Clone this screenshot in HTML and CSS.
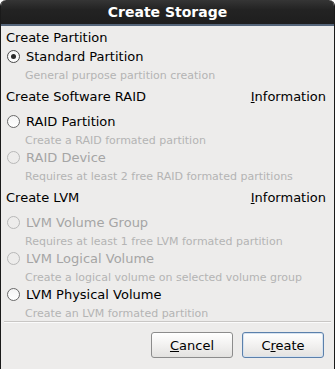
FILE: index.html
```html
<!DOCTYPE html>
<html>
<head>
<meta charset="utf-8">
<link rel="stylesheet" href="styles.css">
</head>
<body>
<div class="dialog">
  <div class="titlebar">Create Storage</div>
  <div class="content">
    <div class="heading first">Create Partition</div>
    <div class="radio"><span class="dot checked"></span><span class="label">Standard Partition</span></div>
    <div class="desc">General purpose partition creation</div>

    <div class="heading info-row"><span>Create Software RAID</span><span class="info"><u>I</u>nformation</span></div>
    <div class="radio"><span class="dot"></span><span class="label">RAID Partition</span></div>
    <div class="desc">Create a RAID formated partition</div>
    <div class="radio disabled"><span class="dot"></span><span class="label">RAID Device</span></div>
    <div class="desc">Requires at least 2 free RAID formated partitions</div>

    <div class="heading info-row"><span>Create LVM</span><span class="info"><u>I</u>nformation</span></div>
    <div class="radio disabled"><span class="dot"></span><span class="label">LVM Volume Group</span></div>
    <div class="desc">Requires at least 1 free LVM formated partition</div>
    <div class="radio disabled"><span class="dot"></span><span class="label">LVM Logical Volume</span></div>
    <div class="desc">Create a logical volume on selected volume group</div>
    <div class="radio"><span class="dot"></span><span class="label">LVM Physical Volume</span></div>
    <div class="desc">Create an LVM formated partition</div>
  </div>
  <div class="separator"></div>
  <div class="actions">
    <button class="btn"><u>C</u>ancel</button>
    <button class="btn default">C<u>r</u>eate</button>
  </div>
</div>
</body>
</html>
```

FILE: styles.css
```css
html, body {
  margin: 0;
  padding: 0;
  background: #ffffff;
}
body {
  font-family: "DejaVu Sans", sans-serif;
  font-size: 13px;
  color: #000;
}
.dialog {
  width: 335px;
  height: 369px;
  box-sizing: border-box;
  background: #edeceb;
  border-left: 1px solid #1a1a1a;
  border-right: 1px solid #1a1a1a;
  border-radius: 6px 6px 0 0;
  display: flex;
  flex-direction: column;
  overflow: hidden;
}
.titlebar {
  height: 24px;
  line-height: 24px;
  background: linear-gradient(#353535, #232323 40%, #1e1e1e);
  color: #ffffff;
  font-weight: bold;
  font-size: 14px;
  text-align: center;
  border-bottom: 2px solid #55657a;
  margin: 0 -1px;
  border-radius: 6px 6px 0 0;
}
.content {
  padding: 2px 5px 0 5px;
  display: flex;
  flex-direction: column;
}
.heading {
  height: 19px;
  line-height: 19px;
}
.heading.info-row {
  height: 28px;
  line-height: 28px;
  margin-bottom: 1px;
  display: flex;
  justify-content: space-between;
}
.info {
  padding-right: 3px;
}
.radio {
  height: 19px;
  display: flex;
  align-items: center;
  padding-left: 1px;
}
.dot {
  width: 11px;
  height: 11px;
  border: 1px solid #6a6a6a;
  border-radius: 50%;
  background: linear-gradient(#f4f4f4, #ffffff);
  margin-right: 6px;
  position: relative;
  flex: none;
}
.dot.checked {
  border-color: #4a4a4a;
}
.dot.checked::after {
  content: "";
  position: absolute;
  left: 3px;
  top: 3px;
  width: 5px;
  height: 5px;
  border-radius: 50%;
  background: #2a2a2a;
}
.radio .label {
  line-height: 19px;
}
.radio.disabled .label {
  color: #a5a5a5;
}
.radio.disabled .dot {
  border-color: #b8b8b8;
  background: #edeceb;
}
.desc {
  font-size: 11px;
  height: 17px;
  line-height: 15px;
  padding-top: 2px;
  box-sizing: border-box;
  padding-left: 19px;
  color: #b4b4b4;
}
.separator {
  height: 1px;
  background: #c9c7c5;
  border-bottom: 1px solid #fbfbfb;
  margin: 0 3px 0 3px;
}
.actions {
  display: flex;
  justify-content: flex-end;
  gap: 9px;
  padding: 9px 10px 0 0;
}
.btn {
  width: 82px;
  height: 26px;
  font-family: "DejaVu Sans", sans-serif;
  font-size: 13px;
  color: #000;
  border: 1px solid #8c8c8c;
  border-radius: 3px;
  background: linear-gradient(#ffffff, #f2f1f0 50%, #e3e2e0);
  padding: 0;
}
.btn.default {
  border-color: #5b80ab;
  box-shadow: inset 0 0 0 1px #d6e2ef;
}
```
